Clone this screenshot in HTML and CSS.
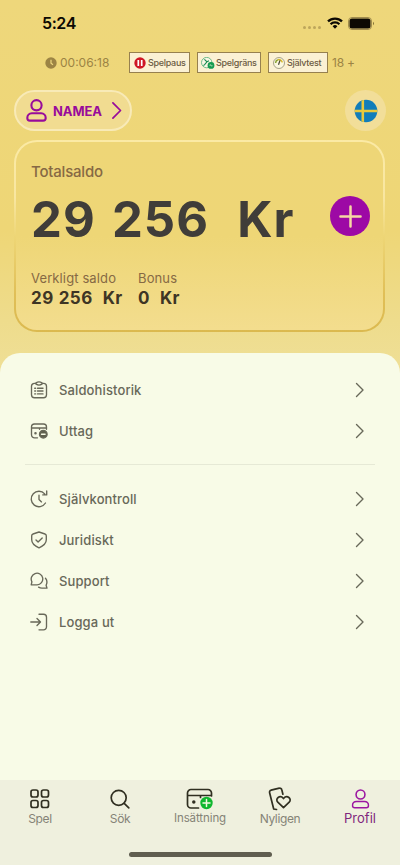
FILE: index.html
```html
<!DOCTYPE html>
<html lang="sv">
<head>
<meta charset="utf-8">
<meta name="viewport" content="width=device-width, initial-scale=1">
<title>Profil</title>
<link rel="stylesheet" href="styles.css">
</head>
<body>
<svg width="0" height="0" class="defs">
  <symbol id="chevron" viewBox="0 0 10 18"><path d="M1.500 2.500 8 9l-6.500 6.500"/></symbol>
  <symbol id="person" viewBox="0 0 20 22"><circle cx="10" cy="6" r="4.900"/><path d="M5.500 13.700h9c2.500 0 4.300 2 4.300 4.500 0 1.600-.9 2.500-2.500 2.500H3.700c-1.600 0-2.500-.9-2.500-2.500 0-2.500 1.800-4.500 4.300-4.500z"/></symbol>
</svg>
<div class="app">
  <header class="status">
    <span class="clock">5:24</span>
    <span class="dots"><i></i><i></i><i></i><i></i></span>
    <svg class="wifi" viewBox="0 0 16 12"><path fill="none" stroke="#0c0903" stroke-width="2.300" d="M1 4.400a10 10 0 0 1 14 0M3.600 7.300a6.200 6.200 0 0 1 8.800 0"/><path fill="#0c0903" d="M8 11.700 5.600 9.300a3.400 3.400 0 0 1 4.800 0z"/></svg>
    <svg class="battery" viewBox="0 0 26 13"><rect x=".5" y=".5" width="23" height="12" rx="3.500" fill="none" stroke="#a18d4e"/><rect x="1.500" y="1.500" width="21" height="10" rx="2.500" fill="#0c0903"/><path d="M25 4.700v3.600c1.100-.7 1.100-2.900 0-3.600z" fill="#75652e"/></svg>
  </header>

  <div class="compliance">
    <svg class="timer-icon" viewBox="0 0 12 12"><circle cx="6" cy="6" r="5.700" fill="#9c8444"/><path d="M6 2.800V6.300L8 7.800" fill="none" stroke="#efd980" stroke-width="1.200"/></svg>
    <span class="timer">00:06:18</span>
    <span class="tag tag-pause">
      <svg viewBox="0 0 12 12"><circle cx="6" cy="6" r="5.700" fill="#cf1626"/><path d="M4.300 3v6M7.700 3v6" stroke="#fff" stroke-width="1.700"/></svg>
      <span>Spelpaus</span></span>
    <span class="tag tag-limit">
      <svg viewBox="0 0 14 12"><circle cx="5.700" cy="5.600" r="5.200" fill="#f8f7e5" stroke="#4cae77" stroke-width=".8"/><path d="M3.400 2.400 6 4.800 3.800 7.300 2.500 8.600M6 4.800l2-1" fill="none" stroke="#168b50" stroke-width="1.100"/><circle cx="10" cy="8.400" r="3.400" fill="#159b51"/><path d="M8.300 8.400h3.400M9 7l2 2.800" stroke="#a2d6ac" stroke-width=".7"/></svg>
      <span>Spelgräns</span></span>
    <span class="tag tag-test">
      <svg viewBox="0 0 12 12"><circle cx="6" cy="6" r="5.500" fill="#fcf8df" stroke="#827e68" stroke-width=".7"/><path d="M2.600 6A3.500 3.500 0 0 1 4.800 2.700" fill="none" stroke="#89a432" stroke-width="1.500"/><path d="M4.800 2.700A3.500 3.500 0 0 1 9.300 5.400" fill="none" stroke="#d8b928" stroke-width="1.500"/><path d="M5.500 7.700 7 3.400" stroke="#454235" stroke-width="1.200"/></svg>
      <span>Självtest</span></span>
    <span class="age">18 +</span>
  </div>

  <div class="account">
    <button class="user"><svg class="user-icon"><use href="#person"/></svg><span>NAMEA</span><svg class="user-arrow"><use href="#chevron"/></svg></button>
    <button class="lang" aria-label="Svenska"><svg viewBox="0 0 24 24"><defs><clipPath id="disc"><circle cx="12" cy="12" r="11.300"/></clipPath></defs><g clip-path="url(#disc)"><path fill="#117dba" d="M0 0h24v24H0z"/><path d="M8.800 0v24M0 12h24" stroke="#e9c93c" stroke-width="2.600"/></g></svg></button>
  </div>

  <section class="card">
    <div class="label total-label">Totalsaldo</div>
    <div class="total">
      <div class="amount"><span>29</span><span>256</span><span class="currency">Kr</span></div>
      <button class="add" aria-label="Lägg till"><svg viewBox="0 0 24 24"><path d="M12 1.500v21M1.500 12h21" stroke="#f6d8a4" stroke-width="2.600" stroke-linecap="round"/></svg></button>
    </div>
    <div class="split">
      <div class="real"><div class="label">Verkligt saldo</div><div class="value"><span>29</span><span>256</span><span class="currency">Kr</span></div></div>
      <div><div class="label">Bonus</div><div class="value"><span>0</span><span class="currency">Kr</span></div></div>
    </div>
  </section>

  <main class="sheet">
    <ul class="menu">
      <li><svg class="mi" viewBox="0 0 18 18"><path d="M5.500 2.300h-1A3 3 0 0 0 1.500 5.300v8.400a3 3 0 0 0 3 3h9a3 3 0 0 0 3-3V5.300a3 3 0 0 0-3-3h-1"/><path d="M6 1.900Q9-.1 12 1.900v1.300Q9 5 6 3.200z"/><path d="M7.500 7.200H13M7.500 10H13M7.500 12.900H13M4.700 7.200h.9M4.700 10h.9M4.700 12.900h.9"/></svg><span>Saldohistorik</span><svg class="arrow"><use href="#chevron"/></svg></li>
      <li><svg class="mi" viewBox="0 0 18 18"><path d="M7.500 15.800h-3a3 3 0 0 1-3-3V5a3 3 0 0 1 3-3h9a3 3 0 0 1 3 3v2.200M1.500 6h15M9.500 6V7.200"/><circle cx="5.500" cy="11.200" r=".6" fill="#60604f"/><circle cx="13.300" cy="12.200" r="3.800" fill="#60604f"/><path d="M11.500 12.200h3.600" stroke="#f8fbe7"/></svg><span>Uttag</span><svg class="arrow"><use href="#chevron"/></svg></li>
    </ul>
    <ul class="menu menu-second">
      <li><svg class="mi" viewBox="0 0 18 18"><path d="M14.700 3.900A7.700 7.700 0 1 0 15.500 13M12.800 4.900h3.900V1M9 5.200v4.200l2.500 2.500"/></svg><span>Självkontroll</span><svg class="arrow"><use href="#chevron"/></svg></li>
      <li><svg class="mi" viewBox="0 0 18 18"><path d="M9 1 15 3q1.300.4 1.300 1.800v4c0 4-3.500 6.400-7.300 8-3.800-1.600-7.300-4-7.300-8v-4Q1.700 3.400 3 3zM6 8.900l2.100 2.100 4.100-4.100"/></svg><span>Juridiskt</span><svg class="arrow"><use href="#chevron"/></svg></li>
      <li><svg class="mi" viewBox="0 0 18 18"><path d="M1.200 12.800h5.900A5.800 5.800 0 1 0 1.900 9.800zM15.500 6.300c1.600 1.900 1.700 4.700.6 6.900l.9 2.900H12c-1.400 0-2.500-.4-3.400-1"/></svg><span>Support</span><svg class="arrow"><use href="#chevron"/></svg></li>
      <li><svg class="mi" viewBox="0 0 18 18"><path d="M.8 9h9.600M7 5.500 10.500 9 7 12.500M9 1.200h4.500a3 3 0 0 1 3 3v9.600a3 3 0 0 1-3 3H9"/></svg><span>Logga ut</span><svg class="arrow"><use href="#chevron"/></svg></li>
    </ul>
  </main>

  <nav class="tabs">
    <a class="tab"><svg viewBox="0 0 22 22"><g><rect x="2" y="2" width="7" height="7" rx="2"/><rect x="12.500" y="2" width="7" height="7" rx="2"/><rect x="2" y="12.500" width="7" height="7" rx="2"/><rect x="12.500" y="12.500" width="7" height="7" rx="2"/></g></svg><span>Spel</span></a>
    <a class="tab"><svg viewBox="0 0 22 22"><circle cx="9.700" cy="9.800" r="7.500"/><path d="m15.200 15.300 4.600 4.500"/></svg><span>Sök</span></a>
    <a class="tab tab-deposit"><svg viewBox="0 0 28 22"><path d="M12.500 20H5a3.500 3.500 0 0 1-3.500-3.500V5A3.500 3.500 0 0 1 5 1.500h17A3.500 3.500 0 0 1 25.500 5v3M1.500 7.500h24M14.500 7.500v2"/><circle cx="7.800" cy="14" r=".9" fill="#302f21"/><circle cx="20.500" cy="15" r="6.200" fill="#10b72f" stroke="none"/><path d="M20.500 11.500v7M17 15h7" stroke="#f4f9df" stroke-width="1.500"/></svg><span>Insättning</span></a>
    <a class="tab tab-recent"><svg viewBox="0 0 24 24"><path d="M8.500 22.500 5.700 22 1.600 5.700a2 2 0 0 1 1.500-2.500l8.200-2a2 2 0 0 1 2.500 1.500l1.100 4.500"/><path d="M15.500 20.700 9.800 15.200c-3.200-3.600 2.200-7.800 5.700-3.700 3.500-4.100 8.900.1 5.700 3.700z"/></svg><span>Nyligen</span></a>
    <a class="tab active"><svg viewBox="0 0 20 22"><use href="#person"/></svg><span>Profil</span></a>
    <i class="home-bar"></i>
  </nav>
</div>
</body>
</html>
```

FILE: styles.css
```css
* { box-sizing: border-box; }
body { margin: 0; font-family: Inter, "Liberation Sans", sans-serif; color: #686859; }
button { font: inherit; border: 0; padding: 0; margin: 0; }
.defs { position: absolute; }
svg { flex: none; display: block; }

.app {
  width: 400px; height: 865px; overflow: hidden;
  display: flex; flex-direction: column;
  background: linear-gradient(#eed77b 0, #eed676 230px, #eedc8c 320px, #efdf96 370px);
}

.status { height: 52px; padding: 0 26px 6px 42px; display: flex; align-items: center; color: #0c0903; }
.clock { font-size: 16px; font-weight: 600; letter-spacing: -.4px; margin-right: auto; }
.dots { display: flex; gap: 2px; margin: 8px 6px 0 0; }
.dots i { width: 3px; height: 3px; border-radius: 50%; background: #bda65b; }
.wifi { width: 16px; height: 12px; margin-right: 5px; }
.battery { width: 26px; height: 13px; }

.compliance { height: 21px; padding-left: 45px; display: flex; align-items: center; color: #9c8444; font-size: 12px; white-space: nowrap; }
.timer-icon { width: 12px; height: 12px; margin-right: 3px; }
.timer { width: 69px; }
.age { letter-spacing: -.2px; }
.tag { height: 21px; border: 1px solid #96804f; background: #fbf1d4; display: flex; align-items: center; color: #6b5b43; font-size: 9px; font-weight: 500; letter-spacing: -.3px; margin-right: 7px; padding-left: 4px; }
.tag svg { height: 12px; width: 12px; margin-right: 2px; }
.tag-pause { width: 61px; }
.tag-limit { width: 64px; padding-left: 3px; }
.tag-limit svg { width: 14px; margin-right: 1px; }
.tag-test { width: 60px; margin-right: 4px; }

.account { height: 67px; padding: 17px 14px 9px; display: flex; justify-content: space-between; }
.user { width: 118px; height: 41px; border: 2px solid #f8eab7; border-radius: 21px; background: #f1dc91; display: flex; align-items: center; color: #980b9b; font-size: 13px; font-weight: 700; letter-spacing: -.1px; padding-left: 10px; }
.user svg { fill: none; stroke: currentColor; stroke-width: 2; stroke-linejoin: round; stroke-linecap: round; }
.user-icon { width: 21px; height: 23px; margin-right: 6px; }
.user .user-arrow { width: 12px; height: 21px; stroke-width: 1.500; margin-left: auto; margin-right: 7px; }
.lang { width: 41px; height: 41px; border-radius: 50%; background: #f2de99; display: grid; place-items: center; }
.lang svg { width: 24px; height: 24px; }

.card {
  height: 192px; margin: 0 15px 0 14px; padding: 21px 14px 0 15px; border: 2px solid transparent; border-radius: 23px;
  background:
    linear-gradient(#eed677, #eed676 50%, #f3dd8e) padding-box,
    linear-gradient(#fbeaa5 0, #f8e6a0 30%, #eed676 50%, #e0bf57 80%, #dbb94f) border-box;
}
.label { color: #866944; font-size: 13px; line-height: 18px; font-weight: 400; letter-spacing: .12px; white-space: nowrap; }
.total-label { font-size: 15px; font-weight: 500; letter-spacing: -.2px; }
.total { height: 71px; display: flex; align-items: center; justify-content: space-between; margin-right: -1px; }
.amount { display: flex; font-size: 49px; line-height: 60px; font-weight: 700; color: #403d39; gap: 16px; padding-top: 7px; letter-spacing: 1.100px; }
.amount .currency { margin-left: 12px; }
.add { width: 40px; height: 40px; border-radius: 50%; background: #9d09a5; display: grid; place-items: center; margin-top: -1px; }
.add svg { width: 23px; height: 23px; }
.split { display: flex; margin-top: 17px; }
.real { width: 107px; }
.value { display: flex; gap: 5px; color: #3e3524; font-size: 17px; line-height: 23px; font-weight: 700; letter-spacing: .45px; }
.value .currency { margin-left: 5px; }

.sheet { flex: 1; margin-top: 21px; padding-top: 16px; background: #f8fbe7; border-radius: 20px 20px 0 0; }
.menu { list-style: none; margin: 0 25px; padding: 0; }
.menu li { height: 41px; display: flex; align-items: center; padding: 0 10px 0 5px; font-size: 13px; font-weight: 500; letter-spacing: .12px; }
.menu svg { fill: none; stroke: currentColor; stroke-linecap: round; stroke-linejoin: round; }
.mi { width: 18px; height: 18px; stroke-width: 1.350; margin-right: 11px; }
.arrow { width: 10px; height: 18px; stroke-width: 1.350; margin-left: auto; }
.menu-second { margin-top: 13px; padding-top: 13px; border-top: 1px solid #e6e9d6; }

.tabs { position: relative; height: 85px; padding-top: 8px; background: #eff0de; display: grid; grid-template-columns: repeat(5, 1fr); }
.tab { display: flex; flex-direction: column; align-items: center; color: #858377; font-size: 12px; line-height: 18px; letter-spacing: -.35px; }
.tab svg { width: 22px; height: 22px; margin-bottom: 0; fill: none; stroke: #302f21; stroke-width: 1.700; stroke-linecap: round; stroke-linejoin: round; }
.tab.tab-deposit { font-size: 11.500px; letter-spacing: -.1px; }
.tab-deposit svg { width: 28px; margin-bottom: -1px; }
.tab-recent svg { width: 24px; height: 24px; margin-top: -1px; margin-bottom: -1px; }
.tab.active { color: #7f277d; font-size: 13px; letter-spacing: 0; }
.tab.active svg { width: 19px; height: 20px; margin: 1px 0 0; stroke: #9b16a1; }
.home-bar { position: absolute; left: 129px; top: 72px; width: 143px; height: 5px; border-radius: 3px; background: #605e50; }
```
